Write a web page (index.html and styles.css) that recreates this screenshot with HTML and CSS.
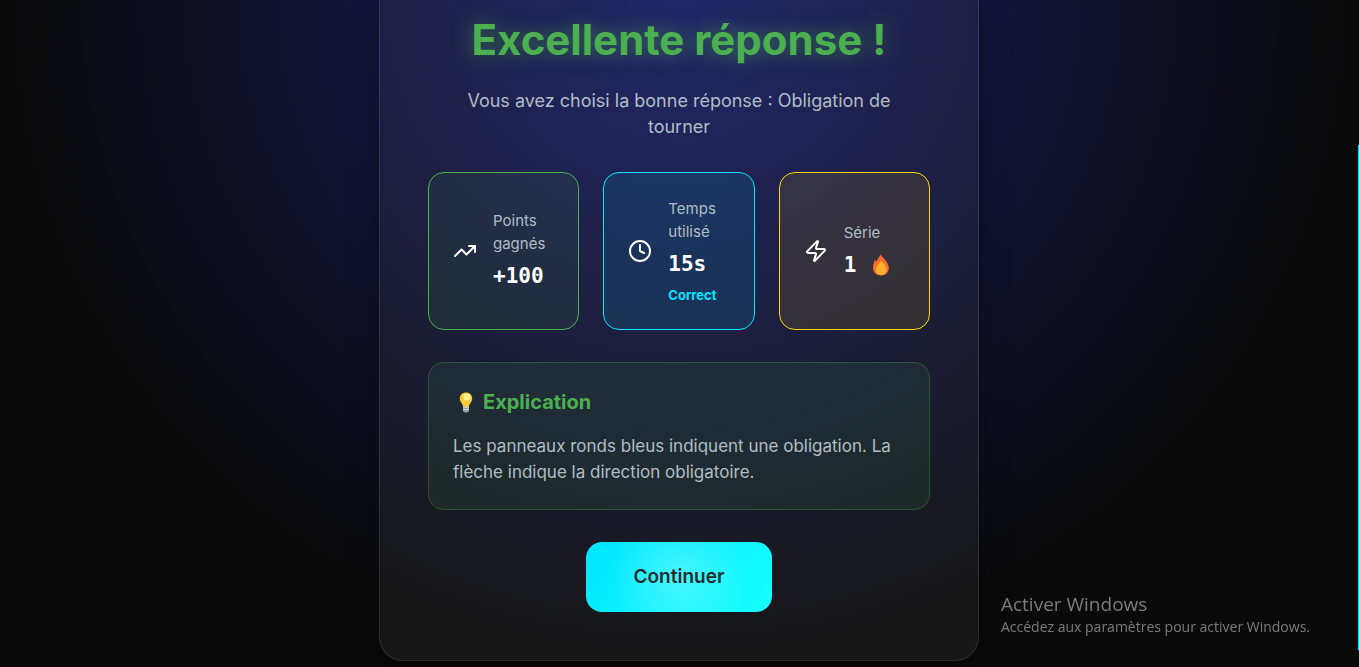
FILE: index.html
```
<!DOCTYPE html>
<html lang="fr">
<head>
<meta charset="utf-8">
<meta name="viewport" content="width=device-width, initial-scale=1">
<title>Excellente réponse !</title>
<link rel="stylesheet" href="styles.css">
</head>
<body>
<main class="card">
  <h1 class="title">Excellente réponse !</h1>
  <p class="message">Vous avez choisi la bonne réponse : Obligation de tourner</p>

  <section class="stats">
    <div class="stat stat-points">
      <svg class="icon" viewBox="0 0 24 24" aria-hidden="true"><polyline points="22 7 13.500 15.500 8.500 10.500 2 17"/><polyline points="16 7 22 7 22 13"/></svg>
      <div class="stat-body">
        <span class="label">Points gagnés</span>
        <span class="value">+100</span>
      </div>
    </div>
    <div class="stat stat-time">
      <svg class="icon" viewBox="0 0 24 24" aria-hidden="true"><circle cx="12" cy="12" r="10"/><polyline points="12 6 12 12 16 14"/></svg>
      <div class="stat-body">
        <span class="label">Temps utilisé</span>
        <span class="value">15s</span>
        <span class="verdict">Correct</span>
      </div>
    </div>
    <div class="stat stat-streak">
      <svg class="icon" viewBox="0 0 24 24" aria-hidden="true"><path d="M4 14a1 1 0 0 1-.78-1.630l9.900-10.200a.5.5 0 0 1 .86.460l-1.920 6.020A1 1 0 0 0 13 10h7a1 1 0 0 1 .78 1.630l-9.900 10.200a.5.5 0 0 1-.86-.460l1.920-6.020A1 1 0 0 0 11 14z"/></svg>
      <div class="stat-body">
        <span class="label">Série</span>
        <span class="value streak">1
          <svg class="flame" viewBox="0 0 18 22" aria-hidden="true"><path fill="#ff6d2d" d="M9 .5c.5 3.200 7.500 6.500 7.800 13.500 0 4.500-3.300 7.500-7.800 7.500S1 18.500 1 14c0-3.300 1.200-6 2-8.200l1.500 2C5.500 5 7.200 3 9 .5Z"/><path fill="#ffb12e" d="M9.300 7c2 2.200 5.200 5 5.200 8.800 0 3.200-2.200 5.200-5.200 5.200s-5.300-2-5.300-5.200C4 12 7.300 9.200 9.300 7Z"/></svg>
        </span>
      </div>
    </div>
  </section>

  <section class="explanation">
    <h2 class="subtitle">
      <svg class="bulb" viewBox="0 0 26 22" aria-hidden="true"><path fill="#9a9da0" d="M10 14h6v5.500c0 1-1 2-3 2s-3-1-3-2Z"/><path fill="#d5d7d8" d="M10 15.500h6v1.200h-6zM10 18h6v1h-6z"/><path fill="#fdcb35" d="M13 1.500c3.700 0 6.200 2.600 6.200 6 0 3.500-2.700 4.500-3.200 8h-6c-.5-3.500-3.200-4.500-3.200-8 0-3.400 2.500-6 6.200-6Z"/><circle cx="14" cy="6" r="3.500" fill="#fff08a"/></svg>
      Explication
    </h2>
    <p class="text">Les panneaux ronds bleus indiquent une obligation. La flèche indique la direction obligatoire.</p>
  </section>

  <button class="continue" type="button">Continuer</button>
</main>

<aside class="watermark">
  <p class="watermark-title">Activer Windows</p>
  <p class="watermark-text">Accédez aux paramètres pour activer Windows.</p>
</aside>
<div class="scroll-thumb"></div>
</body>
</html>
```
FILE: styles.css
```
* { box-sizing: border-box; }

body {
  margin: 0;
  min-height: 100vh;
  padding: 0 1px 6px 0;
  overflow: hidden;
  background: radial-gradient(ellipse at top, #171c62 0%, #0a0a0a 70%) fixed;
  color: #fff;
  font-family: Inter, "Open Sans", sans-serif;
}

h1, h2, p { margin: 0; }

.card {
  display: flex;
  flex-direction: column;
  align-items: center;
  gap: 32px;
  width: 100%;
  max-width: 600px;
  margin: 0 auto;
  padding: 8px 48px 48px;
  border: 1px solid rgba(255, 255, 255, 0.1);
  border-top: 0;
  border-radius: 0 0 24px 24px;
  background: rgba(255, 255, 255, 0.05);
  box-shadow: 0 8px 32px rgba(0, 0, 0, 0.3);
}

.title {
  margin-bottom: -16px;
  color: #4caf50;
  font-size: 42px;
  line-height: 64px;
  font-weight: 700;
  text-align: center;
  text-shadow: 0 0 20px rgba(76, 175, 80, 0.6);
}

.message {
  padding: 0 24px;
  color: #b0bec5;
  font-size: 18px;
  line-height: 26px;
  text-align: center;
}

.stats {
  display: grid;
  grid-template-columns: repeat(3, 1fr);
  gap: 24px;
  width: 100%;
}

.stat {
  display: flex;
  align-items: center;
  gap: 16px;
  padding: 24px;
  border: 1px solid;
  border-radius: 16px;
}

.stat-points { border-color: #4caf50; background: rgba(76, 175, 80, 0.1); }
.stat-time { border-color: #00e5ff; background: rgba(0, 229, 255, 0.1); }
.stat-streak { border-color: #ffd600; background: rgba(255, 214, 0, 0.1); }

.icon {
  flex: none;
  width: 24px;
  height: 24px;
  fill: none;
  stroke: #fff;
  stroke-width: 2;
  stroke-linecap: round;
  stroke-linejoin: round;
}

.stat-body { display: flex; flex-direction: column; min-width: 0; }

.label { color: #b0bec5; font-size: 15px; line-height: 23px; }

.value {
  margin-top: 4px;
  font-family: "DejaVu Sans Mono", monospace;
  font-size: 21px;
  line-height: 34px;
  font-weight: 700;
}

.streak { display: flex; align-items: center; gap: 16px; }
.flame { width: 18px; height: 22px; }

.verdict {
  margin-top: 4px;
  color: #00e5ff;
  font-size: 13px;
  line-height: 20px;
  font-weight: 700;
}

.explanation {
  width: 100%;
  padding: 24px;
  border: 1px solid rgba(76, 175, 80, 0.3);
  border-radius: 16px;
  background: rgba(76, 175, 80, 0.1);
}

.subtitle {
  display: flex;
  align-items: center;
  gap: 4px;
  margin-bottom: 16px;
  color: #4caf50;
  font-size: 20px;
  line-height: 30px;
  font-weight: 700;
}

.bulb { width: 26px; height: 22px; }

.text { color: #b0bec5; font-size: 17px; line-height: 26px; }

.continue {
  padding: 24px 48px;
  border: 0;
  border-radius: 16px;
  background:
    radial-gradient(circle at center, rgba(255, 255, 255, 0.25), transparent 70%),
    linear-gradient(135deg, #00e5ff, #18ffff);
  color: #232b2d;
  font-family: Inter, sans-serif;
  font-size: 19px;
  line-height: 22px;
  font-weight: 600;
}

.watermark {
  position: fixed;
  right: 49px;
  bottom: 30px;
  color: #7c7c7c;
  font-family: "Open Sans", sans-serif;
}

.watermark-title { font-size: 19px; line-height: 26px; }
.watermark-text { font-size: 14px; line-height: 20px; }

.scroll-thumb {
  position: fixed;
  top: 145px;
  right: 0;
  bottom: 17px;
  width: 1px;
  background: #00e5ff;
}
```
